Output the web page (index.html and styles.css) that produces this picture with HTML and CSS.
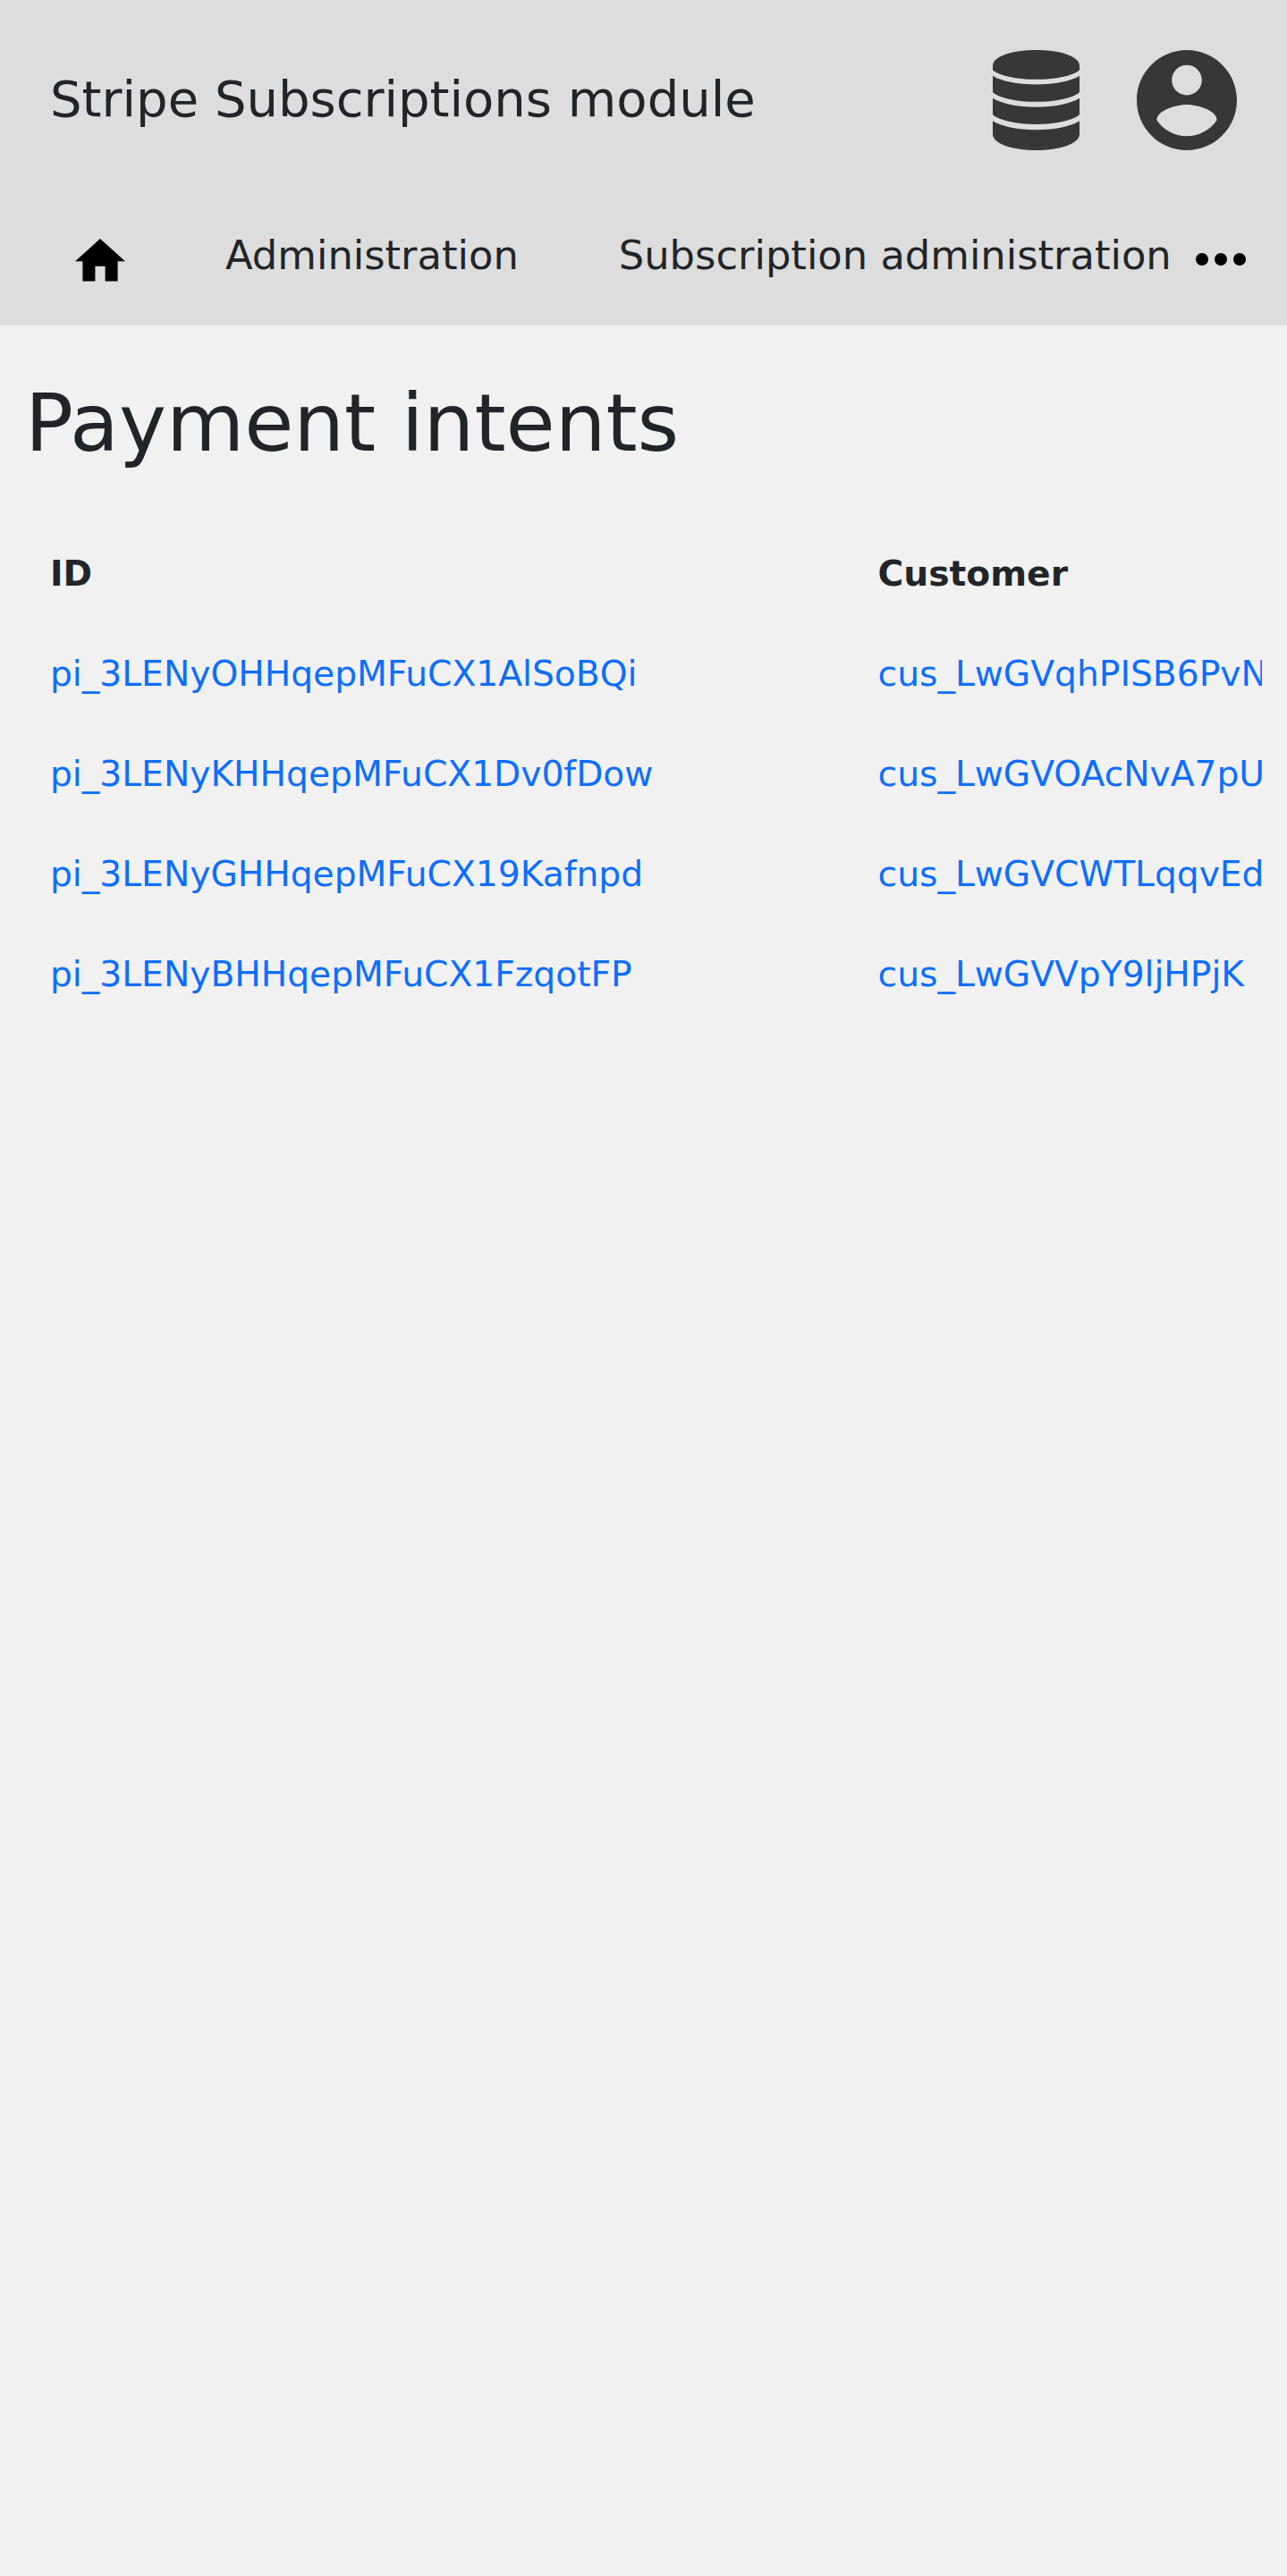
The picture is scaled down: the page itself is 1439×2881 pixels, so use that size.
FILE: index.html
```html
<!DOCTYPE html>
<html lang="en">
<head>
<meta charset="utf-8">
<title>Payment intents</title>
<link rel="stylesheet" href="styles.css">
</head>
<body>
<header class="header">
  <div class="brand-row">
    <span class="brand">Stripe Subscriptions module</span>
    <div class="tools">
      <svg class="icon-db" viewBox="0 0 290 335" preserveAspectRatio="none">
        <path d="M0 52C0 22 62 0 145 0S290 22 290 52V67C268 85 212 98 145 98S22 85 0 67Z"/>
        <path d="M0 86C28 104 82 115 145 115S262 104 290 86V141C266 161 211 173 145 173S24 161 0 141Z"/>
        <path d="M0 161C28 179 82 191 145 191S262 179 290 161V216C266 236 211 248 145 248S24 236 0 216Z"/>
        <path d="M0 237C28 255 82 267 145 267S262 255 290 237V284C286 313 225 335 145 335S4 313 0 284Z"/>
      </svg>
      <svg class="icon-user" viewBox="2 2 20 20"><path d="M12 2C6.480 2 2 6.480 2 12s4.480 10 10 10 10-4.480 10-10S17.520 2 12 2zm0 3c1.660 0 3 1.340 3 3s-1.340 3-3 3-3-1.340-3-3 1.340-3 3-3zm0 14.200c-2.500 0-4.710-1.280-6-3.220.030-1.990 4-3.080 6-3.080 1.990 0 5.970 1.090 6 3.080-1.290 1.940-3.500 3.220-6 3.220z"/></svg>
    </div>
  </div>
  <nav class="nav">
    <svg class="icon-home" viewBox="2 3 20 17" preserveAspectRatio="none"><path d="M10 20v-6h4v6h5v-8h3L12 3 2 12h3v8z"/></svg>
    <a class="nav-link">Administration</a>
    <a class="nav-link">Subscription administration</a>
    <svg class="icon-more" viewBox="0 0 56 14"><circle cx="7" cy="7" r="7"/><circle cx="28" cy="7" r="7"/><circle cx="49" cy="7" r="7"/></svg>
  </nav>
</header>
<main class="main">
  <h1 class="title">Payment intents</h1>
  <div class="table-wrap">
    <table class="table">
      <thead><tr><th class="col-id">ID</th><th>Customer</th></tr></thead>
      <tbody>
        <tr><td><a>pi_3LENyOHHqepMFuCX1AlSoBQi</a></td><td><a>cus_LwGVqhPISB6PvN</a></td></tr>
        <tr><td><a>pi_3LENyKHHqepMFuCX1Dv0fDow</a></td><td><a>cus_LwGVOAcNvA7pU</a></td></tr>
        <tr><td><a>pi_3LENyGHHqepMFuCX19Kafnpd</a></td><td><a>cus_LwGVCWTLqqvEd</a></td></tr>
        <tr><td><a>pi_3LENyBHHqepMFuCX1FzqotFP</a></td><td><a>cus_LwGVVpY9ljHPjK</a></td></tr>
      </tbody>
    </table>
  </div>
</main>
</body>
</html>
```
FILE: styles.css
```css
* { box-sizing: border-box; }
body {
  margin: 0;
  min-height: 2881px;
  background: #f1f1f1;
  color: #212529;
  font-family: "DejaVu Sans", sans-serif;
  font-size: 39.2px;
}
.header { height: 364px; background: #ddd; }
.brand-row {
  display: flex;
  justify-content: space-between;
  align-items: flex-start;
  height: 224px;
  padding: 56px 56px 0;
}
.brand { margin-top: 22px; font-size: 56px; line-height: 65px; }
.tools { display: flex; align-items: center; gap: 64px; fill: #373737; }
.icon-db { width: 97px; height: 112px; }
.icon-user { width: 112px; height: 112px; }
.nav { display: flex; align-items: flex-start; padding: 35px 0 0 84px; white-space: nowrap; }
.icon-home { width: 56px; height: 47.600px; margin-top: 8px; flex: none; }
.nav-link { font-size: 44.8px; line-height: 53px; margin-left: 112px; }
.icon-more { width: 56px; height: 14px; margin: 24px 0 0 27px; flex: none; }
.main { padding: 55px 28px 0; }
.title { margin: 0; font-size: 89.6px; font-weight: 400; line-height: 108px; }
.table-wrap { margin-top: 58px; overflow: hidden; }
.table { table-layout: fixed; width: 1800px; border-collapse: collapse; white-space: nowrap; }
.table th, .table td { height: 112px; padding: 28px 28px 27px; line-height: 57px; text-align: left; vertical-align: top; }
.table .col-id { width: 925.6px; }
.table a { color: #0d6efd; }
```
